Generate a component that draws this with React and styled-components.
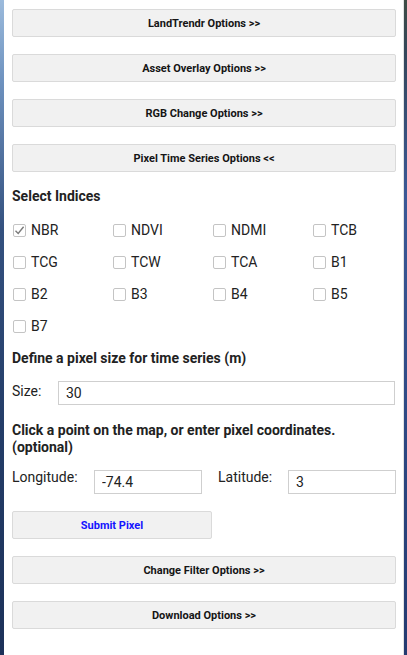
import React, { useState } from 'react'
import styled, { createGlobalStyle } from 'styled-components'

const GlobalStyle = createGlobalStyle`
  html, body {
    margin: 0;
    padding: 0;
    height: 100%;
  }
  body {
    font-family: Roboto, "Liberation Sans", Arial, sans-serif;
    background:
      linear-gradient(to bottom, #9cbbdc 0%, #6f93c0 12%, #34517f 35%, #243d68 65%, #1c3159 100%) left top / 4px 100% no-repeat,
      linear-gradient(to bottom, #3e4c45 0%, #34465a 8%, #3b5896 30%, #2c4680 70%, #243a70 100%) right top / 3px 100% no-repeat,
      #243d68;
  }
`

const Panel = styled.div`
  box-sizing: border-box;
  width: 400px;
  min-height: 655px;
  margin-left: 4px;
  background: #fff;
  border-right: 1px solid #e2e2e2;
  padding: 9px 8px 20px 8px;
  color: #222;
`

const ToggleButton = styled.button`
  display: block;
  box-sizing: border-box;
  width: ${p => p.$width || '384px'};
  height: 28px;
  margin: 0 0 17px 0;
  padding: 0;
  background: #f1f1f1;
  border: 1px solid #dadada;
  border-radius: 2px;
  font-family: Roboto, "Liberation Sans", Arial, sans-serif;
  font-size: 11px;
  font-weight: 700;
  color: ${p => p.$color || '#151515'};
  cursor: pointer;
`

const Heading = styled.div`
  font-size: 14px;
  font-weight: 700;
  line-height: 17px;
  color: #222;
  margin-top: ${p => p.$top || 0}px;
`

const IndexGrid = styled.div`
  display: grid;
  grid-template-columns: repeat(4, 100px);
  grid-auto-rows: 20px;
  row-gap: 12px;
  margin: 15px 0 14px 1px;
`

const CheckItem = styled.label`
  display: flex;
  align-items: center;
  font-size: 14px;
  line-height: 16px;
  color: #222;
  cursor: pointer;
`

const Box = styled.span`
  box-sizing: border-box;
  width: 13px;
  height: 13px;
  margin-right: 5px;
  border: 1px solid #c4c4c4;
  border-radius: 2px;
  background: #fff;
  display: flex;
  align-items: center;
  justify-content: center;
`

const FieldRow = styled.div`
  display: flex;
  align-items: flex-start;
  margin-top: 14px;
`

const FieldLabel = styled.label`
  flex: none;
  width: ${p => p.$width}px;
  margin-left: ${p => p.$left || 0}px;
  margin-top: ${p => p.$offset || 0}px;
  font-size: 14px;
  line-height: 16px;
  color: #222;
`

const TextInput = styled.input`
  box-sizing: border-box;
  width: ${p => p.$width ? `${p.$width}px` : 'auto'};
  flex: ${p => p.$width ? 'none' : '1'};
  height: 24px;
  padding: 0 7px;
  border: 1px solid #cfcfcf;
  border-radius: 0;
  font-family: Roboto, "Liberation Sans", Arial, sans-serif;
  font-size: 14px;
  color: #222;
  outline: none;
`

const Check = ({ label, checked, onToggle }) => (
  <CheckItem onClick={onToggle}>
    <Box>
      {checked && (
        <svg width="11" height="11" viewBox="0 0 11 11">
          <path d="M1.5 5.8 L4.2 8.4 L9.6 1.8" fill="none" stroke="#7a7a7a" strokeWidth="1.4" />
        </svg>
      )}
    </Box>
    {label}
  </CheckItem>
)

const indices = ['NBR', 'NDVI', 'NDMI', 'TCB', 'TCG', 'TCW', 'TCA', 'B1', 'B2', 'B3', 'B4', 'B5', 'B7']

export default function App() {
  const [selected, setSelected] = useState({ NBR: true })
  const [size, setSize] = useState('30')
  const [lon, setLon] = useState('-74.4')
  const [lat, setLat] = useState('3')

  const toggle = (k) => setSelected(s => ({ ...s, [k]: !s[k] }))

  return (
    <>
      <GlobalStyle />
      <Panel>
        <ToggleButton>LandTrendr Options &gt;&gt;</ToggleButton>
        <ToggleButton>Asset Overlay Options &gt;&gt;</ToggleButton>
        <ToggleButton>RGB Change Options &gt;&gt;</ToggleButton>
        <ToggleButton style={{ marginBottom: 0 }}>Pixel Time Series Options &lt;&lt;</ToggleButton>

        <Heading $top={16}>Select Indices</Heading>
        <IndexGrid>
          {indices.map(k => (
            <Check key={k} label={k} checked={!!selected[k]} onToggle={() => toggle(k)} />
          ))}
        </IndexGrid>

        <Heading>Define a pixel size for time series (m)</Heading>
        <FieldRow>
          <FieldLabel $width={46} $offset={2}>Size:</FieldLabel>
          <TextInput value={size} onChange={e => setSize(e.target.value)} />
        </FieldRow>

        <Heading $top={17}>Click a point on the map, or enter pixel coordinates. (optional)</Heading>
        <FieldRow>
          <FieldLabel $width={82} $offset={-1}>Longitude:</FieldLabel>
          <TextInput $width={108} value={lon} onChange={e => setLon(e.target.value)} />
          <FieldLabel $width={70} $left={16} $offset={-1}>Latitude:</FieldLabel>
          <TextInput $width={108} value={lat} onChange={e => setLat(e.target.value)} />
        </FieldRow>

        <ToggleButton $width="200px" $color="#1414ff" style={{ marginTop: 17 }}>Submit Pixel</ToggleButton>
        <ToggleButton>Change Filter Options &gt;&gt;</ToggleButton>
        <ToggleButton>Download Options &gt;&gt;</ToggleButton>
      </Panel>
    </>
  )
}
